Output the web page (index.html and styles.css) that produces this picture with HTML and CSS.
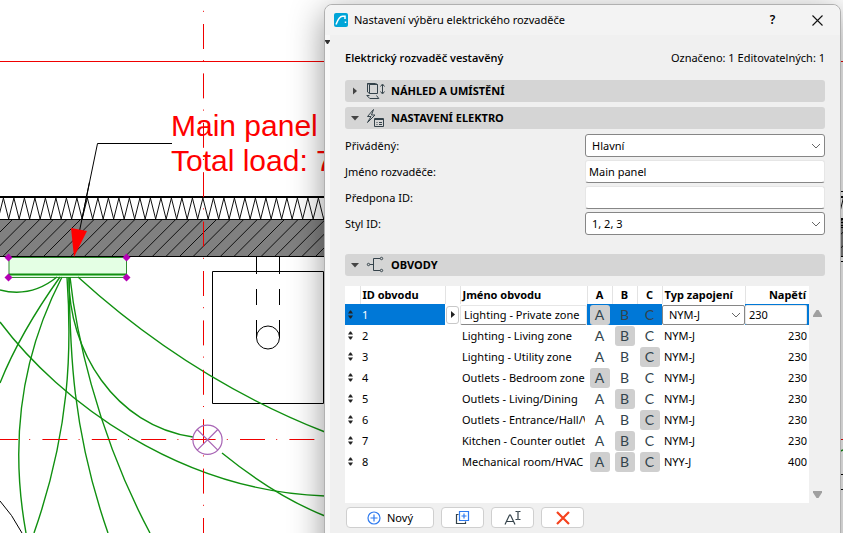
FILE: index.html
```html
<!DOCTYPE html>
<html lang="cs">
<head>
<meta charset="utf-8">
<title>Nastavení výběru elektrického rozvaděče</title>
<link rel="stylesheet" href="styles.css">
</head>
<body>
<div class="workspace">
  <svg class="plan" width="1600" height="900" viewBox="0 0 1600 900" aria-hidden="true">
    <path class="axis" d="M0 61.500H1600"/>
    <path class="thin" d="M172 143.500H97.500L79.500 231"/>
    <path id="insulation" class="hatch"/>
    <rect x="0" y="220" width="1600" height="36" fill="#808080"/>
    <path id="masonry" class="hatch"/>
    <path d="M0 197H1600" stroke="#000" stroke-width="2"/>
    <path class="thin" d="M0 219.500H1600M0 256.500H1600"/>
    <path class="thin" d="M89.500 182L79.500 231"/>
    <path class="thin" d="M212.500 271.500H323.500V403.500H212.500ZM256.500 257V274M279.500 257V274M256.500 289V305M279.500 289V305M256.500 320V338M279.500 320V338"/>
    <circle class="thin" cx="268" cy="337.500" r="11.500"/>
    <path class="thin" d="M0 501Q12 514 22 533"/>
    <path d="M71 228L87 231L74 257Z" fill="#f00"/>
    <rect x="9" y="257.500" width="117.500" height="20" fill="#e4ffe4" stroke="#2e8b2e"/>
    <path d="M9 274.500H126" stroke="#109010" stroke-width="2"/>
    <g class="wire">
      <path d="M57 277Q31 298 0 290"/>
      <path d="M60 277Q20 333 0 383"/>
      <path d="M62 277Q1 395 26 533"/>
      <path d="M67 277C72 350 70 430 34 533"/>
      <path d="M69 277C70 350 72 430 108 533"/>
      <path d="M70 277C75 325 95 430 150 533"/>
      <path d="M69 277C68 350 115 426 193 437"/>
      <path d="M78 277Q190 379 325 432"/>
      <path d="M0 322C60 402 180 491 325 496"/>
      <path d="M222 453Q275 496 325 516"/>
      <path d="M836 453L843 450"/>
    </g>
    <path d="M8.500 253.500l4 4-4 4-4-4zM126.500 253.500l4 4-4 4-4-4zM8.500 273.500l4 4-4 4-4-4zM126.500 273.500l4 4-4 4-4-4z" fill="#b400b4"/>
    <text class="tag" x="171" y="136">Main panel</text>
    <text class="tag" x="171" y="171">Total load: 7</text>
    <path class="axis" stroke-dasharray="25 11.200 1 12.200" d="M203.500 -25.400V900"/>
    <path class="axis" stroke-dasharray="25 11.200 1 12.200" d="M-7 439.500H1600"/>
    <g fill="none" stroke="#a865b5" stroke-width="1.200">
      <circle cx="207.500" cy="439.800" r="14.600"/>
      <path d="M197.200 429.500l20.600 20.600M217.800 429.500l-20.600 20.600"/>
    </g>
    <path class="thin" d="M838 191.500h9M838 222.500h9M838 225.500h9M838 227.500h9M838 474.500h9M838 489.500h9M838 218.500h9M838 261.500h9"/>
  </svg>

  <section class="dialog" aria-labelledby="dialog-title">
    <header class="titlebar">
      <svg class="app-icon" viewBox="0 0 14 14" aria-hidden="true">
        <rect width="14" height="14" rx="2" fill="#00a5d8"/>
        <path d="M2 11.500C4 6 6.500 3.200 8.500 3.200H11V6M11.500 8.500v1.500" fill="none" stroke="#fff" stroke-width="1.500"/>
      </svg>
      <h1 id="dialog-title">Nastavení výběru elektrického rozvaděče</h1>
      <button class="caption-btn help" type="button">?</button>
      <button class="caption-btn" type="button" aria-label="Zavřít">
        <svg width="11" height="11" viewBox="0 0 11 11"><path d="M.5.500l10 10M10.500.500l-10 10" stroke="#111" stroke-width="1.100"/></svg>
      </button>
    </header>

    <div class="content">
      <svg class="edge-mark" width="5" height="4" viewBox="0 0 5 4" aria-hidden="true"><path d="M0 0h5v1L3 4H2L0 1z" fill="#333"/></svg>
      <div class="summary">
        <strong>Elektrický rozvaděč vestavěný</strong>
        <span>Označeno: 1 Editovatelných: 1</span>
      </div>

      <button class="bar" type="button">
        <svg class="arrow" viewBox="0 0 8 8"><path d="M2 0.500L6 4L2 7.500z"/></svg>
        <svg class="bar-icon" viewBox="0 0 20 18"><path d="M3.500 2.500h8v9h-8zM1.500 1.500h8l2 1M1.500 1.500l2 1M1.500 1.500v8.500l2 1.500M3.500 13.500H.8l3 3h9l-2.300-3M16.500 3v8M14.500 4.500l2-2.500 2 2.500M14.500 9.500l2 2.500 2-2.500"/></svg>
        <span>NÁHLED A UMÍSTĚNÍ</span>
      </button>
      <button class="bar" type="button" aria-expanded="true">
        <svg class="arrow" viewBox="0 0 8 8"><path d="M0 2h8L4 6.500z"/></svg>
        <svg class="bar-icon" viewBox="0 0 20 18"><path d="M7.500.500L1.500 7.500H5L1.500 13.500l7.500-7.500H5.500zM8.500 9.500h9v8h-9zM8.500 10.500h9M10.500 13.500h1M13 13.500h3M10.500 15.500h1M13 15.500h3"/></svg>
        <span>NASTAVENÍ ELEKTRO</span>
      </button>

      <div class="form">
        <label for="feed">Přiváděný:</label>
        <span class="pick"><select id="feed"><option>Hlavní</option></select><svg viewBox="0 0 10 6"><path d="M1 1l4 4 4-4"/></svg></span>
        <label for="name">Jméno rozvaděče:</label>
        <input id="name" type="text" value="Main panel">
        <label for="prefix">Předpona ID:</label>
        <input id="prefix" type="text" value="">
        <label for="style">Styl ID:</label>
        <span class="pick"><select id="style"><option>1, 2, 3</option></select><svg viewBox="0 0 10 6"><path d="M1 1l4 4 4-4"/></svg></span>
      </div>

      <button class="bar circuits-bar" type="button" aria-expanded="true">
        <svg class="arrow" viewBox="0 0 8 8"><path d="M0 2h8L4 6.500z"/></svg>
        <svg class="bar-icon" viewBox="0 0 20 18"><path d="M4 8.500h3.500M14 2.500H7.500v12H14"/><circle cx="2.500" cy="8.500" r="1.200"/><circle cx="15.500" cy="2.500" r="1.200"/><circle cx="15.500" cy="14.500" r="1.200"/></svg>
        <span>OBVODY</span>
      </button>

      <div class="list">
        <div class="sheet">
          <table>
            <colgroup><col class="c-sort"><col class="c-id"><col class="c-more"><col><col class="c-phase"><col class="c-phase"><col class="c-phase"><col class="c-type"><col class="c-volt"></colgroup>
            <thead>
              <tr><th></th><th>ID obvodu</th><th></th><th>Jméno obvodu</th><th class="mid">A</th><th class="mid">B</th><th class="mid">C</th><th>Typ zapojení</th><th class="num">Napětí</th></tr>
            </thead>
            <tbody id="rows"></tbody>
          </table>
        </div>
        <div class="scroll" aria-hidden="true">
          <svg width="9" height="7" viewBox="0 0 9 7"><path d="M0 7V5.500L3.500 0h2L9 5.500V7z"/></svg>
          <svg width="9" height="7" viewBox="0 0 9 7"><path d="M0 0v1.500L3.500 7h2L9 1.500V0z"/></svg>
        </div>
      </div>

      <div class="actions">
        <button class="act new" type="button">
          <svg width="14" height="14" viewBox="0 0 14 14"><circle cx="7" cy="7" r="6"/><path d="M7 3.500v7M3.500 7h7"/></svg>
          <span>Nový</span>
        </button>
        <button class="act" type="button" aria-label="Duplikovat">
          <svg width="15" height="15" viewBox="0 0 15 15"><path class="ink" d="M3.500 4.500h-2v9h9v-2"/><path d="M4.500 1.500h9v9h-9zM9 3.500v5M6.500 6h5"/></svg>
        </button>
        <button class="act" type="button" aria-label="Přejmenovat">
          <svg width="17" height="15" viewBox="0 0 17 15"><path class="ink" d="M1 14.500L5.500 5h1L11 14.500M2.500 11.500h7M11.500 1.500h1.500l1 .5 1-.5h1.500M14 2v7M11.500 9.500h1.500l1-.5 1 .5h1.500"/></svg>
        </button>
        <button class="act" type="button" aria-label="Smazat">
          <svg width="14" height="14" viewBox="0 0 14 14"><path class="remove" d="M1 1l12 12M13 1L1 13"/></svg>
        </button>
      </div>
    </div>
  </section>
</div>
<script src="circuits.js"></script>
</body>
</html>
```
FILE: styles.css
```css
* { box-sizing: border-box; }

body {
  margin: 0;
  background: #fff;
  color: #000;
  font: 11px/16px "Noto Sans", "Open Sans", sans-serif;
}

button, input, select { font: inherit; color: inherit; margin: 0; }

svg { display: block; flex: none; }

.workspace {
  position: relative;
  height: 100vh;
  overflow: hidden;
  padding: 4px 2px 0 324px;
}

.plan { position: absolute; top: 0; left: 0; }
.axis { fill: none; stroke: #f00000; }
.thin { fill: none; stroke: #000; }
.hatch { fill: none; stroke: #111; stroke-width: 1; }
.wire { fill: none; stroke: #109010; stroke-width: 1.4; }
.tag { fill: #f00; font: 30px "Liberation Sans", sans-serif; }

.dialog {
  position: relative;
  min-height: 110vh;
  border: 1px solid #b0b0b0;
  border-radius: 8px;
  background: #f8f8f8;
  box-shadow: 0 8px 34px rgba(0, 0, 0, .42);
}

.titlebar {
  display: flex;
  align-items: center;
  height: 30px;
  padding-left: 9px;
  border-radius: 8px 8px 0 0;
  background: #f3f3f3;
}
.app-icon { width: 14px; height: 14px; margin-right: 6px; }
h1 { flex: 1; margin: 0; font-size: 11px; font-weight: 400; line-height: 16px; }
.caption-btn {
  display: grid;
  place-items: center;
  width: 45px;
  height: 30px;
  padding: 0;
  border: 0;
  background: none;
}
.help { font-size: 12px; font-weight: 600; }

.content {
  position: relative;
  min-height: 110vh;
  margin-left: 5px;
  padding: 15px 15px 0 15px;
  background: #f0f0f0;
}
.edge-mark { position: absolute; left: -5px; top: 5px; }

.summary {
  display: flex;
  justify-content: space-between;
  margin-bottom: 14px;
}
.summary strong { font-family: "Open Sans", "Noto Sans", sans-serif; font-weight: 600; }

.bar {
  display: flex;
  align-items: center;
  width: 100%;
  height: 22px;
  margin-bottom: 5px;
  padding: 0 6px;
  border: 0;
  border-radius: 3px;
  background: #d5d5d5;
  font-weight: 700;
  text-align: left;
}
.arrow { width: 8px; height: 8px; margin-right: 7px; fill: #444; }
.bar-icon { width: 20px; height: 18px; margin-right: 5px; fill: none; stroke: #34424a; }
.circuits-bar { margin: 19px 0 10px; }

.form {
  display: grid;
  grid-template-columns: 1fr 1fr;
  row-gap: 3px;
  align-items: center;
}
.form input, .form select {
  width: 100%;
  height: 23px;
  padding: 0 3px;
  border: 1px solid #e6e6e6;
  border-bottom-color: #868686;
  border-radius: 3px;
  background: #fff;
  appearance: none;
}
.pick { display: grid; align-items: center; justify-items: end; }
.pick > * { grid-area: 1 / 1; }
.pick svg { width: 10px; height: 6px; margin-right: 4px; fill: none; stroke: #666; pointer-events: none; }
.form select { padding: 0 6px; border-color: #868686; }

.list { display: flex; }
.sheet { flex: 1; min-width: 0; min-height: 217px; background: #fff; }
.scroll {
  display: flex;
  flex-direction: column;
  justify-content: space-between;
  align-items: center;
  width: 16px;
  padding: 24px 0 5px;
  fill: #a0a0a0;
}

table { width: 100%; border-collapse: collapse; table-layout: fixed; }
.c-sort, .c-more { width: 15px; }
.c-id { width: 85px; }
.c-phase { width: 25px; }
.c-type { width: 83px; }
.c-volt { width: 64px; }
th, td { padding: 0 2px; overflow: hidden; white-space: nowrap; text-align: left; }
th { height: 18px; font-weight: 700; border-right: 1px solid #e3e3e3; }
th:last-child { border-right: 0; }
td { height: 21px; }
th.mid, td.mid { padding: 0; text-align: center; }
th.num { padding-right: 3px; text-align: right; }
td.num { text-align: right; }
td svg { fill: #222; }
td.sort { padding-left: 3px; }
.clip { overflow: hidden; }

.phase {
  display: block;
  width: 20px;
  height: 20px;
  margin: 0 auto;
  padding: 0;
  border: 0;
  border-radius: 3px;
  background: none;
  color: #33434c;
  font: 14px/20px Lato, sans-serif;
}
.phase[aria-pressed="true"] { background: #cfcfcf; }

.selected { background: #0078d7; }
.selected .white { color: #fff; }
.selected .field { padding: 0; background: #fff; }
.selected .last { padding-right: 2px; background: #0078d7; }
.field input, .field select {
  display: block;
  width: 100%;
  height: 20px;
  padding: 0 3px;
  border: 1px solid #e6e6e6;
  border-bottom-color: #868686;
  border-radius: 2px;
  background: #fff;
  appearance: none;
}
.field select { padding: 0 6px; border-color: #868686; }
.more {
  display: grid;
  place-items: center;
  width: 13px;
  height: 18px;
  margin: 0 auto;
  padding: 0;
  border: 1px solid #c8c8c8;
  border-radius: 3px;
  background: #fff;
}

.actions { display: flex; gap: 7px; padding: 4px 1px; }
.act {
  display: flex;
  align-items: center;
  justify-content: center;
  gap: 6px;
  width: 43px;
  height: 21px;
  padding: 0;
  border: 1px solid #cfcfcf;
  border-radius: 4px;
  background: #fff;
}
.new { width: 88px; }
.act svg { fill: none; stroke: #2f7bf0; stroke-width: 1.2; }
.act .ink { stroke: #34424a; }
.act .remove { stroke: #f5421e; stroke-width: 2.2; }
```
FILE: circuits.js
```js
// Wall hatches: a zigzag for the insulation, diagonals for the masonry.
const zigzag = "M-7.1 198" + "l5.25 21l5.25 -21".repeat(150);
document.getElementById("insulation").setAttribute("d", zigzag);

let diagonals = "";
for (let x = -24; x < 1600; x += 13.6) diagonals += `M${x.toFixed(1)} 256l36 -36`;
document.getElementById("masonry").setAttribute("d", diagonals);

const circuits = [
  ["1", "Lighting - Private zone", "A", "NYM-J", "230"],
  ["2", "Lighting - Living zone", "B", "NYM-J", "230"],
  ["3", "Lighting - Utility zone", "C", "NYM-J", "230"],
  ["4", "Outlets - Bedroom zone", "A", "NYM-J", "230"],
  ["5", "Outlets - Living/Dining", "B", "NYM-J", "230"],
  ["6", "Outlets - Entrance/Hall/V", "C", "NYM-J", "230"],
  ["7", "Kitchen - Counter outlet", "B", "NYM-J", "230"],
  ["8", "Mechanical room/HVAC", "ABC", "NYY-J", "400"]
];

const sortIcon = '<svg width="5" height="9" viewBox="0 0 5 9"><path d="M0 3.500L2 .500h1L5 3.500zM0 5.500h5L3 8.500H2z"/></svg>';

document.getElementById("rows").innerHTML = circuits.map(([id, name, phases, type, volt], i) => {
  const active = i === 0;
  const phaseCells = ["A", "B", "C"].map(p =>
    `<td class="mid"><button class="phase" type="button" aria-pressed="${phases.includes(p)}">${p}</button></td>`).join("");
  const more = active
    ? '<td class="field"><button class="more" type="button" aria-label="Možnosti"><svg width="4" height="7" viewBox="0 0 4 7"><path d="M0 0l4 3.500L0 7z"/></svg></button></td>'
    : "<td></td>";
  const nameCell = active ? `<td class="field"><input type="text" aria-label="Jméno obvodu" value="${name}"></td>` : `<td><div class="clip">${name}</div></td>`;
  const typeCell = active
    ? `<td class="field"><span class="pick"><select aria-label="Typ zapojení"><option>${type}</option></select><svg viewBox="0 0 10 6"><path d="M1 1l4 4 4-4"/></svg></span></td>`
    : `<td>${type}</td>`;
  const voltCell = active ? `<td class="field last"><input type="text" aria-label="Napětí" value="${volt}"></td>` : `<td class="num">${volt}</td>`;
  return `<tr class="${active ? "selected" : ""}"><td class="sort">${sortIcon}</td><td class="white">${id}</td>${more}${nameCell}${phaseCells}${typeCell}${voltCell}</tr>`;
}).join("");
```
